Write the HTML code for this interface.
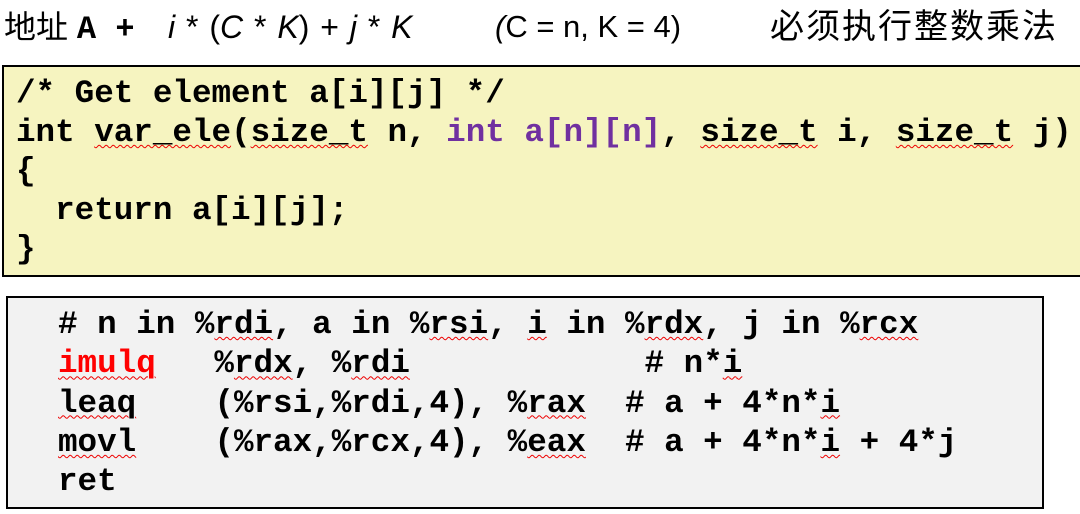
<!DOCTYPE html>
<html><head><meta charset="utf-8"><style>
body{margin:0;width:1080px;height:514px;background:#fff;position:relative;overflow:hidden;font-family:"Liberation Sans","Noto Sans CJK SC",sans-serif}
.t{position:absolute;top:5px;font-size:32px;line-height:44px;white-space:pre;color:#000}
.m{font-family:"Liberation Mono",monospace;font-weight:bold}
pre{margin:0;font-family:"Liberation Mono",monospace;font-weight:bold;white-space:pre;color:#000}
.box1{position:absolute;left:2px;top:65px;width:1090px;background:#f6f4c0;border:2px solid #000;box-sizing:border-box;height:212px}
.box1 pre{position:absolute;left:12px;top:7px;font-size:32.6px;line-height:39px}
.box2{position:absolute;left:6px;top:296px;width:1038px;height:213px;background:#f2f2f2;border:2px solid #000;box-sizing:border-box}
.box2 pre{position:absolute;left:50px;top:7px;font-size:32.6px;line-height:39.3px}
.p{color:#7030a0}.r{color:#f00}
u{text-decoration:underline wavy #e00;text-decoration-thickness:1px;text-underline-offset:3px}
</style></head><body>
<div class="t" style="left:4px">地址 <span class="m">A + </span></div>
<div class="t" style="left:168px;word-spacing:2px"><i>i</i> * (<i>C</i> * <i>K</i>) + <i>j</i> * <i>K</i></div>
<div class="t" style="left:495px;font-size:31px"><i>(</i>C = n, K = 4)</div>
<div class="t" style="left:770px;font-size:34px;letter-spacing:2px">必须执行整数乘法</div>
<div class="box1"><pre>/* Get element a[i][j] */
int <u>var_ele</u>(<u>size_t</u> n, <span class="p">int a[n][n]</span>, <u>size_t</u> i, <u>size_t</u> j)
{
  return a[i][j];
}</pre></div>
<div class="box2"><pre># n in %<u>rdi</u>, a in %<u>rsi</u>, <u>i</u> in %<u>rdx</u>, j in %<u>rcx</u>
<u class="r">imulq</u>   %<u>rdx</u>, %<u>rdi</u>            # n*<u>i</u>
<u>leaq</u>    (%rsi,%rdi,4), %<u>rax</u>  # a + 4*n*<u>i</u>
<u>movl</u>    (%rax,%rcx,4), %<u>eax</u>  # a + 4*n*<u>i</u> + 4*j
ret</pre></div>
</body></html>
